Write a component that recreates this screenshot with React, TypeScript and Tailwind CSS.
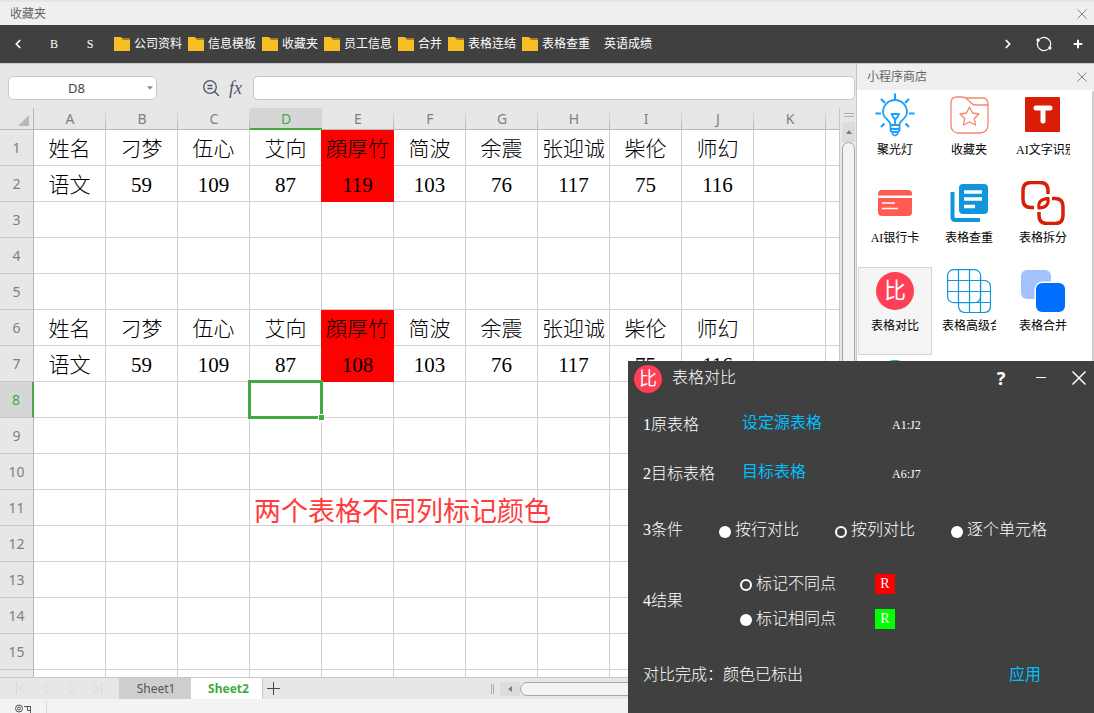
import React, { useState } from "react";
import { ChevronLeft, ChevronRight, Plus } from "lucide-react";

const COLUMNS = ["A", "B", "C", "D", "E", "F", "G", "H", "I", "J", "K", ""];
const NAMES = ["姓名", "刁梦", "伍心", "艾向", "顔厚竹", "简波", "余震", "张迎诚", "柴伦", "师幻"];
const SOURCE = ["语文", "59", "109", "87", "119", "103", "76", "117", "75", "116"];
const TARGET = ["语文", "59", "109", "87", "108", "103", "76", "117", "75", "116"];

const CELLS: Record<number, string[]> = {
  1: NAMES,
  2: SOURCE,
  6: NAMES,
  7: TARGET,
};

const FOLDERS = ["公司资料", "信息模板", "收藏夹", "员工信息", "合并", "表格连结", "表格查重"];

function FolderIcon() {
  return (
    <svg width="16" height="14" viewBox="0 0 16 14">
      <path d="M7 1h9v4H7z" fill="#a67f22" />
      <path d="M0 0h7l2 3h7v11H0z" fill="#f6bf26" />
    </svg>
  );
}

function CloseIcon() {
  return (
    <svg width="10" height="10" viewBox="0 0 10 10" stroke="#808080">
      <path d="m.5.5 9 9M9.500.5l-9 9" />
    </svg>
  );
}

function RefreshIcon() {
  return (
    <svg width="16" height="16" viewBox="0 0 16 16" fill="none" stroke="#fff" strokeWidth="1.2">
      <path d="M4 2.900A6.500 6.500 0 0 1 13.800 11" />
      <path d="M12 13.100A6.500 6.500 0 0 1 2.200 5" />
      <circle cx="2.200" cy="4" r="1.100" fill="#fff" />
      <circle cx="13.800" cy="12" r="1.100" fill="#fff" />
    </svg>
  );
}

function BulbIcon() {
  return (
    <svg width="44" height="44" viewBox="0 0 44 44" fill="none" stroke="#1aa0fa" strokeWidth="1.8" strokeLinejoin="round">
      <path d="M17.500 32c0-5-7.500-6-7.500-13a12 12 0 0 1 24 0c0 7-7.500 8-7.500 13z" />
      <path d="M17.500 32v5q0 2 2.500 2h4q2.500 0 2.500-2v-5M17.500 36h9M19.500 39v2q2.500 3 5 0v-2" />
      <path d="M18.500 21h7.500l-2.500 4.500h-2.500zM22 25.500V32" />
      <path d="M22 .5V6M2.500 20.500H8M36 20.500h5.500M8 6l4 4M36 6l-4 4M8 34l3.500-3.500M36 34l-3.500-3.500" strokeWidth="2.200" />
    </svg>
  );
}

function FavoriteIcon() {
  return (
    <svg width="44" height="44" viewBox="0 0 44 44" fill="none" stroke="#f58671" strokeWidth="1.3" strokeLinejoin="round">
      <path d="M4 10q0-6 6-6h5q3 0 5 2l4 4q2 2 5 2h12v19q0 9-8 9H12q-8 0-8-8z" />
      <path d="M19 5h17q5 0 5 7" />
      <path d="m22.500 14 3 6 6.500 1-4.700 4.500 1.200 6.500-6-3-6 3 1.200-6.500L13 21l6.500-1z" />
    </svg>
  );
}

function OcrIcon() {
  return (
    <svg width="44" height="44" viewBox="0 0 44 44">
      <rect x="4" y="4" width="35" height="35" rx="1" fill="#d81e06" />
      <path d="M15 15h14M22 15v13" stroke="#fff" strokeWidth="5" strokeLinecap="round" />
    </svg>
  );
}

function BankCardIcon() {
  return (
    <svg width="44" height="44" viewBox="0 0 44 44">
      <path d="M5 14.500V13q0-4 4-4h26q4 0 4 4v1.500zM5 17h34v14q0 4-4 4H9q-4 0-4-4z" fill="#ff5b52" />
      <path d="M9 22h13M9 27.500h16" stroke="#fff" strokeWidth="1.600" />
    </svg>
  );
}

function DuplicateIcon() {
  return (
    <svg width="44" height="44" viewBox="0 0 44 44">
      <path d="M5.500 11v25q0 3 3 3H33" fill="none" stroke="#1296db" strokeWidth="4" />
      <rect x="12" y="3" width="29" height="30" rx="4" fill="#1296db" />
      <path d="M17 11h18M17 18h18M17 25.500h11" stroke="#fff" strokeWidth="3.500" />
    </svg>
  );
}

function SplitIcon() {
  return (
    <svg width="44" height="44" viewBox="0 0 44 44" fill="none" stroke="#d81e06" strokeWidth="3.500">
      <path d="M13 26.500H10q-8 0-8-8V9.500q0-8 8-8h9q8 0 8 8V13" />
      <path d="M31 17.500h3q8 0 8 8v9q0 8-8 8h-8q-8 0-8-8V31" />
      <path d="M18 27q-1.500-9 9-9.500 1.500 9-9 9.500z" strokeWidth="3" />
    </svg>
  );
}

function CompareIcon() {
  return (
    <span className="flex size-full items-center justify-center rounded-full bg-[#ff3f55] leading-none font-normal text-white">
      比
    </span>
  );
}

function AdvancedMergeIcon() {
  return (
    <svg width="44" height="44" viewBox="0 0 44 44" fill="none" stroke="#1296db" strokeWidth="1.200">
      <rect x="0.600" y="0.600" width="33" height="33" rx="6" />
      <path d="M33.500 11.500h3q7 0 7 7v18q0 7-7 7h-18q-7 0-7-7v-3" />
      <path d="M11.500 1v33M22.500 1v43M33.500 8v36M1 11.500h33M1 22.500h43M8 33.500h36" />
    </svg>
  );
}

function MergeIcon() {
  return (
    <svg width="44" height="44" viewBox="0 0 44 44">
      <rect width="30" height="29" y="1" rx="6" fill="#a3c2fb" />
      <rect x="13.500" y="12.500" width="33" height="33" rx="8" fill="#fff" />
      <rect x="15" y="14" width="29" height="29" rx="6" fill="#006eff" />
    </svg>
  );
}

function TealIcon() {
  return (
    <svg width="44" height="44" viewBox="0 0 44 44">
      <circle cx="22" cy="22" r="19" fill="#1abc9c" />
    </svg>
  );
}

const APPS = [
  { name: "聚光灯", icon: <BulbIcon /> },
  { name: "收藏夹", icon: <FavoriteIcon /> },
  { name: "AI文字识别", icon: <OcrIcon /> },
  { name: "AI银行卡", icon: <BankCardIcon /> },
  { name: "表格查重", icon: <DuplicateIcon /> },
  { name: "表格拆分", icon: <SplitIcon /> },
  {
    name: "表格对比",
    icon: (
      <span className="size-[38px] text-[22px]">
        <CompareIcon />
      </span>
    ),
    active: true,
  },
  { name: "表格高级合并", icon: <AdvancedMergeIcon /> },
  { name: "表格合并", icon: <MergeIcon /> },
  { name: "", icon: <TealIcon /> },
];

function Toolbar() {
  return (
    <nav className="flex h-[38px] shrink-0 items-center bg-[#404040] text-xs text-white">
      <button aria-label="后退" className="flex w-9 justify-center">
        <ChevronLeft size={14} strokeWidth={3} />
      </button>
      <button className="w-9 text-center">B</button>
      <button className="w-9 text-center">S</button>
      <div className="ml-1.5 flex items-center gap-1.5 whitespace-nowrap">
        {FOLDERS.map((folder) => (
          <button key={folder} className="flex items-center gap-1">
            <FolderIcon />
            {folder}
          </button>
        ))}
        <button className="pl-2">英语成绩</button>
      </div>
      <div className="ml-auto flex items-center">
        <button aria-label="前进" className="flex w-9 justify-center">
          <ChevronRight size={14} strokeWidth={3} />
        </button>
        <button aria-label="刷新" className="flex w-9 justify-center">
          <RefreshIcon />
        </button>
        <button aria-label="添加" className="flex w-8 justify-center">
          <Plus size={12} strokeWidth={4} />
        </button>
      </div>
    </nav>
  );
}

function FormulaBar() {
  return (
    <div className="flex h-11 shrink-0 items-center pt-1 pr-px pl-2">
      <div className="relative w-[149px]">
        <input
          aria-label="名称框"
          defaultValue="D8"
          className="h-6 w-full rounded-[5px] border border-[#c9c9c9] bg-white pr-3 text-center font-['Noto_Sans'] text-[13px] text-[#444]"
        />
        <svg className="absolute top-2.5 right-1" width="6" height="4" viewBox="0 0 7 4">
          <path d="M0 0h7L3.500 4z" fill="#8c8c8c" />
        </svg>
      </div>
      <button aria-label="查找" className="ml-[46px]">
        <svg width="17" height="17" viewBox="0 0 17 17" fill="none" stroke="#4a5568" strokeWidth="1.300">
          <circle cx="7" cy="7" r="6.300" />
          <path d="M4.500 5.500h5M4.500 8.500h5M11.500 11.500 16 16" />
        </svg>
      </button>
      <button className="ml-2 w-[25px] pl-px text-left font-['Liberation_Serif'] text-lg leading-6 text-[#4a5568] italic">fx</button>
      <input aria-label="编辑栏" className="h-6 min-w-0 flex-1 rounded-[5px] border border-[#c9c9c9] bg-white px-2 text-sm" />
    </div>
  );
}

function Grid() {
  return (
    <div className="min-w-0 flex-1 overflow-hidden bg-white">
      <table className="w-[898px] table-fixed border-separate border-spacing-0">
        <colgroup>
          <col className="w-[34px]" />
          {COLUMNS.map((col) => (
            <col key={col} className="w-[72px]" />
          ))}
        </colgroup>
        <thead>
          <tr className="h-[22px] bg-[#e7e7e7] font-['Noto_Sans'] text-sm leading-5 text-[#7f7f7f]">
            <th className="border-r border-b border-[#b8b8b8] p-0">
              <svg className="mt-1 ml-[18px]" width="11" height="11" viewBox="0 0 11 11">
                <path d="M11 0v11H0z" fill="#b9b9b9" />
              </svg>
            </th>
            {COLUMNS.map((col) => (
              <th
                key={col}
                className={
                  col === "D"
                    ? "border-b border-[#43a943] bg-[#d6d6d6] p-0 font-normal text-[#43a943] shadow-[inset_0_-1px_0_#43a943]"
                    : "border-b border-[#b8b8b8] bg-[linear-gradient(to_bottom,#e7e7e7,#b4b4b4)] bg-[length:1px_100%] bg-right bg-no-repeat p-0 font-normal"
                }
              >
                {col}
              </th>
            ))}
          </tr>
        </thead>
        <tbody>
          {Array.from({ length: 16 }, (_, i) => i + 1).map((row) => (
            <tr key={row} className="h-9">
              <th
                className={
                  row === 8
                    ? "border-r-2 border-b border-r-[#43a943] border-b-[#c8c8c8] bg-[#d6d6d6] p-0 font-['Noto_Sans'] text-sm font-normal text-[#43a943]"
                    : "border-r border-b border-r-[#b8b8b8] border-b-[#c8c8c8] bg-[#e7e7e7] p-0 font-['Noto_Sans'] text-sm font-normal text-[#7f7f7f]"
                }
              >
                {row < 16 && row}
              </th>
              {COLUMNS.map((col, i) => {
                const value = CELLS[row]?.[i];
                const marked = col === "E" && value !== undefined;
                return (
                  <td
                    key={col}
                    className={
                      marked
                        ? "relative border-r border-b border-[#ff0000] bg-[#ff0000] px-0 pt-0.5 pb-0 text-center text-[21px] leading-8 font-light whitespace-nowrap text-black shadow-[-1px_0_0_#ff0000]"
                        : "relative border-r border-b border-[#d0d0d0] px-0 pt-0.5 pb-0 text-center text-[21px] leading-8 font-light whitespace-nowrap text-black"
                    }
                  >
                    {value}
                    {row === 8 && col === "D" && (
                      <>
                        <span className="absolute -inset-0.5 z-10 border-3 border-[#43a943]" />
                        <span className="absolute -right-1 -bottom-1 z-10 size-[7px] border border-white bg-[#43a943]" />
                      </>
                    )}
                    {row === 11 && col === "D" && (
                      <span className="absolute top-0.5 left-1 z-10 font-['Noto_Sans_CJK_SC',sans-serif] text-[27px] leading-9 font-normal text-[#ff3b3b]">
                        两个表格不同列标记颜色
                      </span>
                    )}
                  </td>
                );
              })}
            </tr>
          ))}
        </tbody>
      </table>
    </div>
  );
}

function VerticalScrollbar() {
  return (
    <div className="flex w-[17px] shrink-0 flex-col border-l border-[#c8c8c8] pr-px pl-0.5">
      <div className="flex h-3.5 shrink-0 flex-col items-center justify-center gap-0.5">
        <span className="h-px w-2.5 bg-[#adadad]" />
        <span className="h-px w-2.5 bg-[#adadad]" />
      </div>
      <button aria-label="向上滚动" className="flex h-5 shrink-0 items-center justify-center bg-[#dcdcdc]">
        <svg width="6" height="4" viewBox="0 0 6 4">
          <path d="M0 4h6L3 0z" fill="#7d7d7d" />
        </svg>
      </button>
      <div className="flex-1 rounded-full border border-[#a6a6a6] bg-[#f3f3f3]" />
    </div>
  );
}

function SheetTabs() {
  return (
    <div className="flex h-[22px] shrink-0 items-stretch border-t border-[#c8c8c8] font-['Noto_Sans'] text-xs">
      <svg className="mt-1 ml-4 shrink-0" width="86" height="13" viewBox="0 0 86 13" fill="none" stroke="#d8d8d8">
        <path d="M.5 0v13M8.500 1 3 6.500 8.500 12M33 1l-5.500 5.500L33 12M53 1l5.500 5.500L53 12M77 1l5.500 5.500L77 12M85.500 0v13" />
      </svg>
      <button className="ml-[17px] w-[72px] bg-[#cecece] pl-0.5 text-[#555]">Sheet1</button>
      <button className="w-[71px] bg-white pl-1 font-bold text-[#43a943]">Sheet2</button>
      <button aria-label="新建工作表" className="border-l border-[#c8c8c8] pl-1 text-[#3f4a5c]">
        <svg width="13" height="13" viewBox="0 0 13 13" stroke="currentColor">
          <path d="M6.500 0v13M0 6.500h13" />
        </svg>
      </button>
      <div className="ml-[211px] flex flex-1 items-center">
        <span className="h-2.5 w-[3px] border-x border-[#adadad]" />
        <button aria-label="向左滚动" className="ml-1.5 flex h-3.5 w-5 items-center justify-center bg-[#dcdcdc]">
          <svg width="4" height="6" viewBox="0 0 4 6">
            <path d="M4 0v6L0 3z" fill="#7d7d7d" />
          </svg>
        </button>
        <span className="h-3.5 flex-1 rounded-full border border-[#a6a6a6] bg-[#f3f3f3]" />
      </div>
    </div>
  );
}

function StatusBar() {
  return (
    <div className="flex h-3.5 shrink-0 items-start overflow-hidden bg-[#f3f3f3] pt-0.5 pl-[15px]">
      <svg width="17" height="14" viewBox="0 0 17 14" fill="none" stroke="#555">
        <circle cx="4" cy="7.500" r="3.500" />
        <circle cx="4" cy="7.500" r="1.500" />
        <path d="M9 5.500h6.500V12M12.500 5.500v4H15" />
      </svg>
      <span className="ml-3.5 h-3.5 w-px bg-[#d8d8d8]" />
    </div>
  );
}

function AppStore() {
  return (
    <aside className="flex w-[238px] shrink-0 flex-col border-l border-[#c8c8c8] bg-white">
      <header className="flex h-[26px] shrink-0 items-center justify-between bg-[#efefef] pr-[7px] pl-2.5 text-xs text-[#666]">
        小程序商店
        <button aria-label="关闭小程序商店">
          <CloseIcon />
        </button>
      </header>
      <div className="flex min-h-0 flex-1 justify-between pt-px pl-px">
        <div className="grid grid-cols-[74px_74px_74px] content-start overflow-hidden">
          {APPS.map((app) => (
            <button
              key={app.name}
              className={
                app.active
                  ? "flex h-[88px] flex-col items-center bg-[#f5f5f5] pt-0.5 outline outline-offset-[-1px] outline-[#d5d5d5]"
                  : "flex h-[88px] flex-col items-center pt-0.5"
              }
            >
              <span className="flex size-11 items-center justify-center">{app.icon}</span>
              <span className="max-w-[54px] overflow-hidden text-xs leading-[26px] whitespace-nowrap text-black">{app.name}</span>
            </button>
          ))}
        </div>
        <span className="w-0.5 bg-[#cdcdcd]" />
      </div>
    </aside>
  );
}

interface RadioProps {
  name: string;
  label: string;
  checked: boolean;
  onChange: () => void;
}

function Radio({ name, label, checked, onChange }: RadioProps) {
  return (
    <label className="flex items-center gap-1 whitespace-nowrap">
      <input
        type="radio"
        name={name}
        checked={checked}
        onChange={onChange}
        className="mt-[3px] size-3 appearance-none rounded-full border-white bg-white checked:border-2 checked:bg-transparent"
      />
      {label}
    </label>
  );
}

function CompareDialog() {
  const [mode, setMode] = useState("按列对比");
  const [mark, setMark] = useState("标记不同点");

  return (
    <section className="absolute right-0 bottom-0 z-20 w-[466px] bg-[#404040] pl-[15px] text-base leading-6 font-light text-white">
      <header className="-ml-[9px] flex h-9 items-center">
        <span className="size-7 shrink-0 text-lg">
          <CompareIcon />
        </span>
        <h2 className="ml-2.5 flex-1 pb-0.5">表格对比</h2>
        <button className="w-10 pb-0.5 font-['Noto_Sans'] text-lg font-bold">?</button>
        <button aria-label="最小化" className="flex w-[39px] justify-center">
          <span className="mb-1 h-px w-2.5 bg-white" />
        </button>
        <button aria-label="关闭" className="ml-2 mr-1 flex w-[22px] justify-center pb-0.5">
          <svg width="14" height="14" viewBox="0 0 14 14" stroke="#fff" strokeWidth="1.500">
            <path d="m.5.5 13 13M13.500.5l-13 13" />
          </svg>
        </button>
      </header>
      <div className="grid h-[54px] grid-cols-[99px_150px_1fr] items-center pt-px">
        <span>1原表格</span>
        <button className="pb-1 text-left font-normal text-[#00bfff]">设定源表格</button>
        <span className="text-xs">A1:J2</span>
      </div>
      <div className="grid h-11 grid-cols-[99px_150px_1fr] items-center pt-px">
        <span>2目标表格</span>
        <button className="pb-1 text-left font-normal text-[#00bfff]">目标表格</button>
        <span className="text-xs">A6:J7</span>
      </div>
      <div className="flex h-[70px] items-center">
        <span className="w-[76px]">3条件</span>
        <div className="grid grid-cols-[116px_116px_116px]">
          {["按行对比", "按列对比", "逐个单元格"].map((item) => (
            <Radio key={item} name="mode" label={item} checked={mode === item} onChange={() => setMode(item)} />
          ))}
        </div>
      </div>
      <div className="flex h-[72px] items-center">
        <span className="w-[97px]">4结果</span>
        <div className="grid grid-cols-[135px_20px] grid-rows-[35px_35px] items-center">
          <Radio name="mark" label="标记不同点" checked={mark === "标记不同点"} onChange={() => setMark("标记不同点")} />
          <button aria-label="不同点颜色" className="size-5 bg-[#ff0000] text-sm leading-5">
            R
          </button>
          <Radio name="mark" label="标记相同点" checked={mark === "标记相同点"} onChange={() => setMark("标记相同点")} />
          <button aria-label="相同点颜色" className="size-5 bg-[#00ff00] text-sm leading-5">
            R
          </button>
        </div>
      </div>
      <div className="flex h-[76px] items-center justify-between pr-[53px]">
        <span>对比完成：颜色已标出</span>
        <button className="font-normal text-[#00bfff]">应用</button>
      </div>
    </section>
  );
}

export default function App() {
  return (
    <div className="relative flex h-screen flex-col overflow-hidden bg-[#e7e7e7] font-['Liberation_Serif','Noto_Sans_CJK_SC',serif]">
      <header className="flex h-[25px] shrink-0 items-center justify-between border-t-2 border-[#e6e6e6] bg-[#efefef] pr-[7px] pl-2.5 text-xs text-[#666]">
        收藏夹
        <button aria-label="关闭收藏夹">
          <CloseIcon />
        </button>
      </header>
      <Toolbar />
      <div className="flex min-h-0 flex-1 border-t border-[#c8c8c8]">
        <main className="flex min-w-0 flex-1 flex-col">
          <FormulaBar />
          <div className="flex min-h-0 flex-1">
            <Grid />
            <VerticalScrollbar />
          </div>
          <SheetTabs />
          <StatusBar />
        </main>
        <AppStore />
      </div>
      <CompareDialog />
    </div>
  );
}
